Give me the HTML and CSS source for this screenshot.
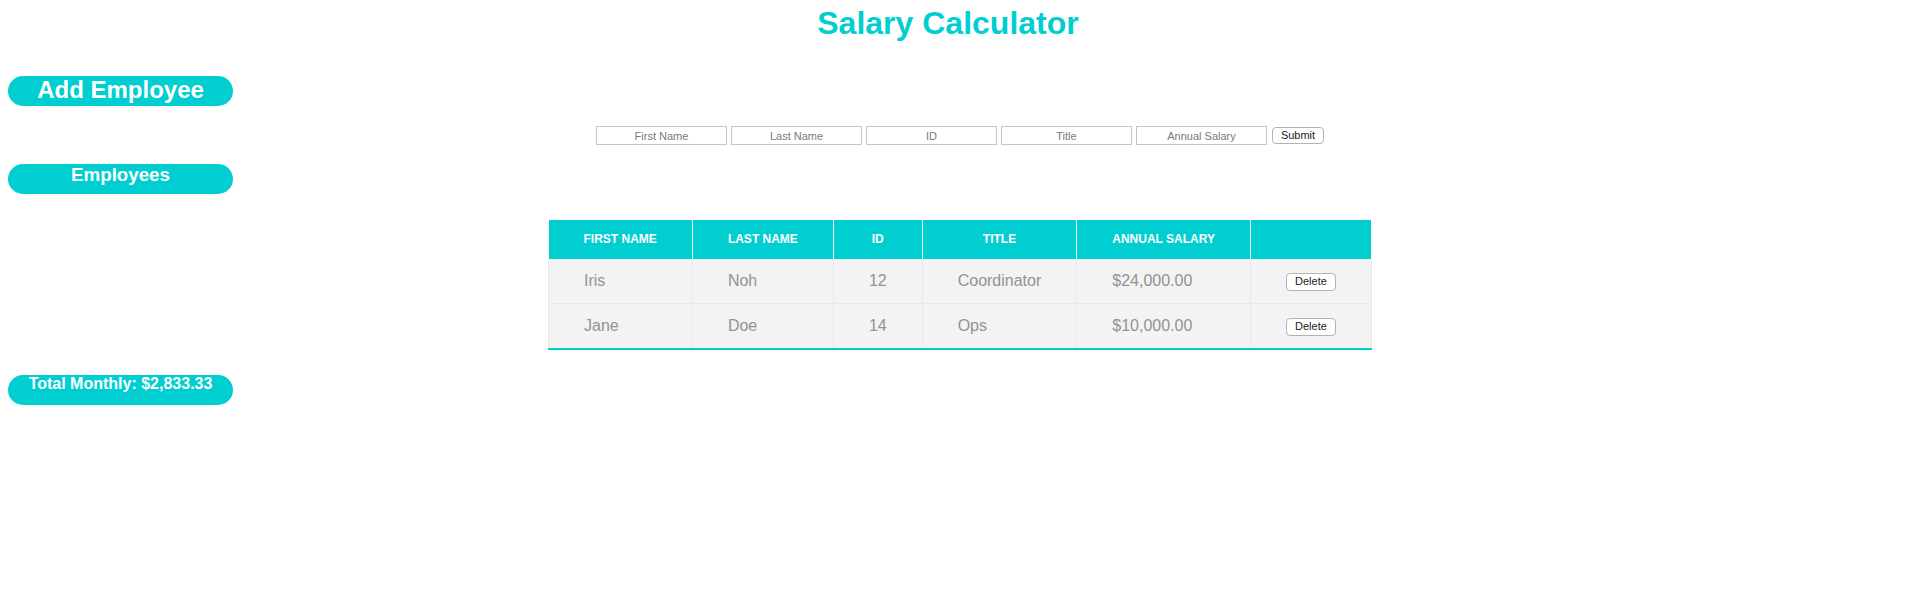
FILE: index.html
```html
<!DOCTYPE html>
<html lang="en">
<head>
<meta charset="utf-8">
<title>Salary Calculator</title>
<link rel="stylesheet" href="styles.css">
</head>
<body>
  <h1 class="title">Salary Calculator</h1>
  <h2 class="pill pill-add">Add Employee</h2>
  <form class="emp-form">
    <input class="field" type="text" placeholder="First Name">
    <input class="field" type="text" placeholder="Last Name">
    <input class="field" type="text" placeholder="ID">
    <input class="field" type="text" placeholder="Title">
    <input class="field" type="text" placeholder="Annual Salary">
    <button class="btn btn-submit" type="button">Submit</button>
  </form>
  <h3 class="pill pill-emp">Employees</h3>
  <table class="emp-table">
    <thead>
      <tr>
        <th>FIRST NAME</th>
        <th>LAST NAME</th>
        <th>ID</th>
        <th>TITLE</th>
        <th>ANNUAL SALARY</th>
        <th></th>
      </tr>
    </thead>
    <tbody>
      <tr>
        <td>Iris</td>
        <td>Noh</td>
        <td>12</td>
        <td>Coordinator</td>
        <td>$24,000.00</td>
        <td><button class="btn btn-del" type="button">Delete</button></td>
      </tr>
      <tr>
        <td>Jane</td>
        <td>Doe</td>
        <td>14</td>
        <td>Ops</td>
        <td>$10,000.00</td>
        <td><button class="btn btn-del" type="button">Delete</button></td>
      </tr>
    </tbody>
  </table>
  <h4 class="pill pill-total">Total Monthly: $2,833.33</h4>
</body>
</html>
```

FILE: styles.css
```css
html, body {
  background: #ffffff;
}

body {
  margin: 0 8px;
  font-family: "Liberation Sans", Arial, Helvetica, sans-serif;
  color: #222;
}

.title {
  margin: 5px 0 0;
  padding-right: 24px;
  font-size: 32px;
  line-height: 36px;
  font-weight: bold;
  text-align: center;
  color: #00ced1;
}

.pill {
  box-sizing: border-box;
  width: 225px;
  height: 30px;
  margin: 0;
  border-radius: 15px;
  background: #00ced1;
  color: #ffffff;
  text-align: center;
  font-weight: bold;
  line-height: normal;
}

.pill-add {
  margin-top: 35px;
  font-size: 24px;
}

.pill-emp {
  margin-top: 19px;
  font-size: 18.72px;
}

.pill-total {
  margin-top: 25px;
  font-size: 16px;
}

.emp-form {
  margin: 20px 0 0;
  display: flex;
  justify-content: center;
  align-items: center;
  gap: 4px;
  height: 19px;
}

.field {
  box-sizing: border-box;
  width: 131px;
  height: 19px;
  margin: 0;
  padding: 0 4px;
  border: 1px solid #c6c6c6;
  border-radius: 0;
  background: #fff;
  font-family: "Liberation Sans", Arial, sans-serif;
  font-size: 11px;
  text-align: center;
  color: #333;
  outline: none;
}

.field::placeholder {
  color: #7a7a7a;
  opacity: 1;
}

.btn {
  box-sizing: border-box;
  margin: 0;
  padding: 0;
  border: 1px solid #b3b3b3;
  border-radius: 4px;
  background: #ffffff;
  font-family: "Liberation Sans", Arial, sans-serif;
  font-size: 11px;
  color: #1a1a1a;
  line-height: 1;
}

.btn-submit {
  width: 52px;
  height: 17px;
  margin-left: 1px;
}

.btn-del {
  width: 50px;
  height: 18px;
  vertical-align: middle;
}

.emp-table {
  margin: 26px auto 0;
  border-collapse: collapse;
}

.emp-table th {
  padding: 13px 35px;
  background: #00ced1;
  color: #ffffff;
  font-size: 12px;
  font-weight: bold;
  line-height: 13px;
  text-align: center;
  border-left: 1px solid #ffffff;
}

.emp-table th:first-child {
  border-left: none;
}

.emp-table td {
  padding: 13px 35px 12px;
  background: #f3f3f3;
  color: #929292;
  font-size: 16px;
  line-height: 18px;
  text-align: left;
  border: 1px solid #e8e8e8;
  border-top: none;
}

.emp-table tbody tr:last-child td {
  border-bottom: 2px solid #00ced1;
}
```
